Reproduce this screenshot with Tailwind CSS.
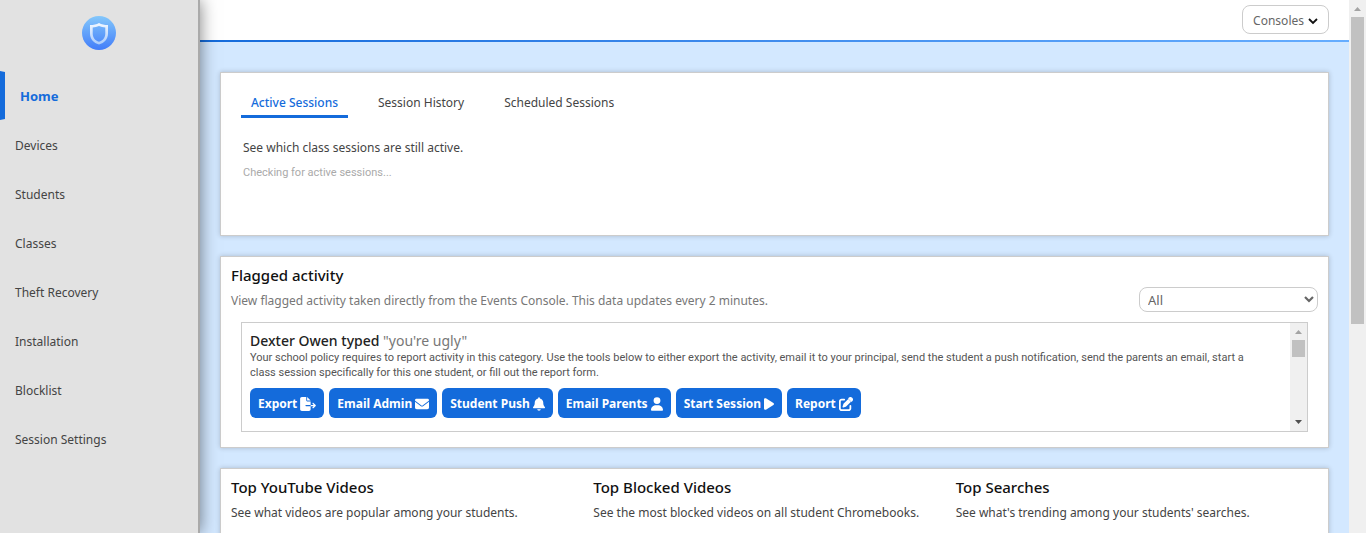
<!DOCTYPE html>
<html lang="en">
<head>
<meta charset="utf-8">
<meta name="viewport" content="width=device-width, initial-scale=1">
<title>Home</title>
<script src="https://cdn.jsdelivr.net/npm/@tailwindcss/browser@4"></script>
</head>
<body class="flex h-screen overflow-hidden bg-[#d3e8ff] font-['Segoe_UI','Noto_Sans',sans-serif] text-xs leading-5 text-[#444]">

<aside class="relative z-10 flex w-[200px] shrink-0 flex-col border-r-2 border-[#aaa] bg-[#e2e2e2] pt-4 shadow-[0_0_16px_rgba(0,0,0,0.5)]">
  <a href="#" aria-label="Dashboard" class="mx-auto block">
    <svg class="size-[34px]" viewBox="0 0 34 34">
      <defs>
        <linearGradient id="disc" x1="0" y1="0" x2="0" y2="1"><stop offset="0" stop-color="#83c7fb"/><stop offset="1" stop-color="#427df9"/></linearGradient>
        <linearGradient id="rim" x1="0" y1="0" x2="0" y2="1"><stop offset="0" stop-color="#f2f8ff"/><stop offset="1" stop-color="#a9cbfb"/></linearGradient>
      </defs>
      <circle cx="17" cy="17" r="17" fill="url(#disc)"/>
      <path fill-rule="evenodd" fill="url(#rim)" d="M17 7c-2.500 1.500-5.500 2-9 2v8.500c0 5.500 3.500 9.500 9 11 5.500-1.500 9-5.500 9-11V9c-3.500 0-6.500-.5-9-2zm0 3c2 .9 4 1.400 6.300 1.500v6c0 4-2.300 7-6.300 8.300-4-1.300-6.300-4.300-6.300-8.300v-6C13 11.400 15 10.900 17 10z"/>
    </svg>
  </a>
  <nav class="mt-[21px] flex flex-col">
    <a href="#" class="flex h-[49px] items-center border-y border-l-[5px] border-y-transparent border-l-[#146bdb] pl-[15px] text-[13px] font-bold text-[#146bdb]">Home</a>
    <a href="#" class="flex h-[49px] items-center pt-[2px] pl-[15px]">Devices</a>
    <a href="#" class="flex h-[49px] items-center pt-[2px] pl-[15px]">Students</a>
    <a href="#" class="flex h-[49px] items-center pt-[2px] pl-[15px]">Classes</a>
    <a href="#" class="flex h-[49px] items-center pt-[2px] pl-[15px]">Theft Recovery</a>
    <a href="#" class="flex h-[49px] items-center pt-[2px] pl-[15px]">Installation</a>
    <a href="#" class="flex h-[49px] items-center pt-[2px] pl-[15px]">Blocklist</a>
    <a href="#" class="flex h-[49px] items-center pt-[2px] pl-[15px]">Session Settings</a>
  </nav>
</aside>

<div class="flex min-w-0 flex-1 flex-col">
  <header class="shrink-0 bg-white">
    <div class="flex h-10 items-start justify-end pt-[5px] pr-5">
      <button type="button" class="flex h-[29px] items-center gap-1 rounded-lg border border-[#ccc] bg-white px-[10px] pt-[2px] text-[#666]">Consoles
        <svg class="size-[10px]" viewBox="0 0 10 10"><path d="M1 3l4 4 4-4" fill="none" stroke="#111" stroke-width="1.800"/></svg>
      </button>
    </div>
    <div class="h-[2px] bg-linear-to-r from-[#146bdb] to-[#66adff]"></div>
  </header>

  <main class="flex flex-col gap-5 px-5 pt-[30px]">
    <section class="h-[164px] shrink-0 border border-[#ccc] bg-white px-5 pt-5 shadow-[0_0_5px_rgba(0,0,0,0.2)]">
      <div role="tablist" class="flex gap-5">
        <button type="button" role="tab" aria-selected="true" class="border-b-3 border-[#146bdb] px-[10px] pb-[2px] font-medium text-[#146bdb]">Active Sessions</button>
        <button type="button" role="tab" aria-selected="false" class="border-b-3 border-transparent px-[10px] pb-[2px]">Session History</button>
        <button type="button" role="tab" aria-selected="false" class="border-b-3 border-transparent px-[10px] pb-[2px]">Scheduled Sessions</button>
      </div>
      <p class="mt-5 pl-[2px]">See which class sessions are still active.</p>
      <p class="mt-[5px] pl-[2px] font-['Segoe_UI',Roboto,sans-serif] text-[11px] text-[#aaa]">Checking for active sessions...</p>
    </section>

    <section class="h-[192px] shrink-0 border border-[#ccc] bg-white px-[10px] pt-2 shadow-[0_0_5px_rgba(0,0,0,0.2)]">
      <div class="flex items-end justify-between">
        <div class="pb-px">
          <h2 class="text-[15px] font-medium text-[#111]">Flagged activity</h2>
          <p class="mt-[6px] text-[#777]">View flagged activity taken directly from the Events Console. This data updates every 2 minutes.</p>
        </div>
        <div class="relative">
          <select aria-label="Filter" class="block h-[25px] w-[179px] appearance-none rounded-lg border border-[#ccc] bg-white px-2 text-[13px] text-[#666]"><option>All</option></select>
          <svg class="pointer-events-none absolute top-[7px] right-1 size-[10px]" viewBox="0 0 10 10"><path d="M1 3l4 4 4-4" fill="none" stroke="#666" stroke-width="2.200"/></svg>
        </div>
      </div>
      <div class="mx-[10px] mt-[10px] flex h-[110px] border border-[#ccc]">
        <div class="min-w-0 flex-1 px-2 pt-[9px]">
          <h3 class="text-sm leading-[18px] font-medium text-[#222]">Dexter Owen typed <span class="font-normal text-[#777]">"you're ugly"</span></h3>
          <p class="pr-5 font-['Segoe_UI',Roboto,sans-serif] text-[11px] leading-[15px] text-[#555]">Your school policy requires to report activity in this category. Use the tools below to either export the activity, email it to your principal, send the student a push notification, send the parents an email, start a class session specifically for this one student, or fill out the report form.</p>
          <div class="mt-2 flex gap-[5px] font-bold text-white">
            <button type="button" class="flex h-[30px] items-center gap-[3px] rounded-md bg-[#146bdb] px-2 pt-[2px]">Export
              <svg class="h-[14px] w-4" viewBox="0 0 576 512" fill="currentColor"><path d="M0 64C0 29 29 0 64 0h160v128c0 18 14 32 32 32h128v128H216c-13 0-24 11-24 24s11 24 24 24h168v112c0 35-29 64-64 64H64c-35 0-64-29-64-64V64zm384 272v-48h110l-39-39c-9-9-9-25 0-34s25-9 34 0l80 80c9 9 9 25 0 34l-80 80c-9 9-25 9-34 0s-9-25 0-34l39-39H384zm0-208H256V0l128 128z"/></svg></button>
            <button type="button" class="flex h-[30px] items-center gap-[3px] rounded-md bg-[#146bdb] px-2 pt-[2px]">Email Admin
              <svg class="size-[14px]" viewBox="0 0 512 512" fill="currentColor"><path d="M48 64a48 48 0 0 0-29 86l218 164c11 9 27 9 38 0l218-164a48 48 0 0 0-29-86H48zM0 176v208c0 35 29 64 64 64h384c35 0 64-29 64-64V176L294 339c-22 17-53 17-76 0L0 176z"/></svg></button>
            <button type="button" class="flex h-[30px] items-center gap-[3px] rounded-md bg-[#146bdb] px-2 pt-[2px]">Student Push
              <svg class="h-[14px] w-3" viewBox="0 0 448 512" fill="currentColor"><path d="M224 0c-18 0-32 14-32 32v19C119 66 64 131 64 208v19c0 47-17 92-48 127l-8 9a32 32 0 0 0 24 53h384a32 32 0 0 0 24-53l-8-9c-31-35-48-80-48-127v-19c0-77-55-142-128-157V32c0-18-14-32-32-32zm45 493c12-12 19-28 19-45H160c0 17 7 33 19 45s28 19 45 19 33-7 45-19z"/></svg></button>
            <button type="button" class="flex h-[30px] items-center gap-[3px] rounded-md bg-[#146bdb] px-2 pt-[2px]">Email Parents
              <svg class="h-[14px] w-3" viewBox="0 0 448 512" fill="currentColor"><path d="M224 256a128 128 0 1 0 0-256 128 128 0 1 0 0 256zm-46 48C80 304 0 384 0 482c0 17 13 30 30 30h388c17 0 30-13 30-30 0-98-80-178-178-178h-92z"/></svg></button>
            <button type="button" class="flex h-[30px] items-center gap-[3px] rounded-md bg-[#146bdb] px-2 pt-[2px]">Start Session
              <svg class="h-[14px] w-[10px]" viewBox="0 0 384 512" fill="currentColor"><path d="M73 39C58 30 40 30 25 38S0 63 0 80v352c0 17 9 33 25 41s33 8 48-1l288-176c14-8 23-24 23-41s-9-32-23-41L73 39z"/></svg></button>
            <button type="button" class="flex h-[30px] items-center gap-[3px] rounded-md bg-[#146bdb] px-2 pt-[2px]">Report
              <svg class="size-[14px]" viewBox="0 0 512 512" fill="currentColor"><path d="M472 22c-30-30-79-30-109 0l-30 30 128 128 30-30c30-30 30-79 0-109l-19-19zM172 242c-6 6-11 14-14 22l-29 89c-3 8-1 18 6 24s15 9 24 6l89-29c8-3 16-8 22-14l168-168-98-98-168 168zM96 64c-53 0-96 43-96 96v256c0 53 43 96 96 96h256c53 0 96-43 96-96v-96c0-18-14-32-32-32s-32 14-32 32v96c0 18-14 32-32 32H96c-18 0-32-14-32-32V160c0-18 14-32 32-32h96c18 0 32-14 32-32s-14-32-32-32H96z"/></svg></button>
          </div>
        </div>
        <div aria-hidden="true" class="flex w-[17px] shrink-0 flex-col items-center bg-[#f0f0f0]">
          <svg class="h-[17px] w-[17px]" viewBox="0 0 17 17"><path d="M5 11l3.500-4 3.500 4z" fill="#a3a3a3"/></svg>
          <div class="h-[17px] w-[13px] bg-[#c1c1c1]"></div>
          <svg class="mt-auto h-[17px] w-[17px]" viewBox="0 0 17 17"><path d="M5 6l3.500 4L12 6z" fill="#505050"/></svg>
        </div>
      </div>
    </section>

    <section class="grid h-[192px] shrink-0 grid-cols-3 border border-[#ccc] bg-white px-[10px] pt-2 shadow-[0_0_5px_rgba(0,0,0,0.2)]">
      <div>
        <h2 class="text-[15px] font-medium text-[#111]">Top YouTube Videos</h2>
        <p class="mt-[6px]">See what videos are popular among your students.</p>
      </div>
      <div>
        <h2 class="text-[15px] font-medium text-[#111]">Top Blocked Videos</h2>
        <p class="mt-[6px]">See the most blocked videos on all student Chromebooks.</p>
      </div>
      <div>
        <h2 class="text-[15px] font-medium text-[#111]">Top Searches</h2>
        <p class="mt-[6px]">See what's trending among your students' searches.</p>
      </div>
    </section>
  </main>
</div>

<div aria-hidden="true" class="flex w-[17px] shrink-0 flex-col items-center bg-[#f0f0f0]">
  <svg class="h-[17px] w-[17px] shrink-0" viewBox="0 0 17 17"><path d="M5 11l3.500-4 3.500 4z" fill="#a3a3a3"/></svg>
  <div class="h-[307px] w-[13px] bg-[#c1c1c1]"></div>
</div>
</body>
</html>
